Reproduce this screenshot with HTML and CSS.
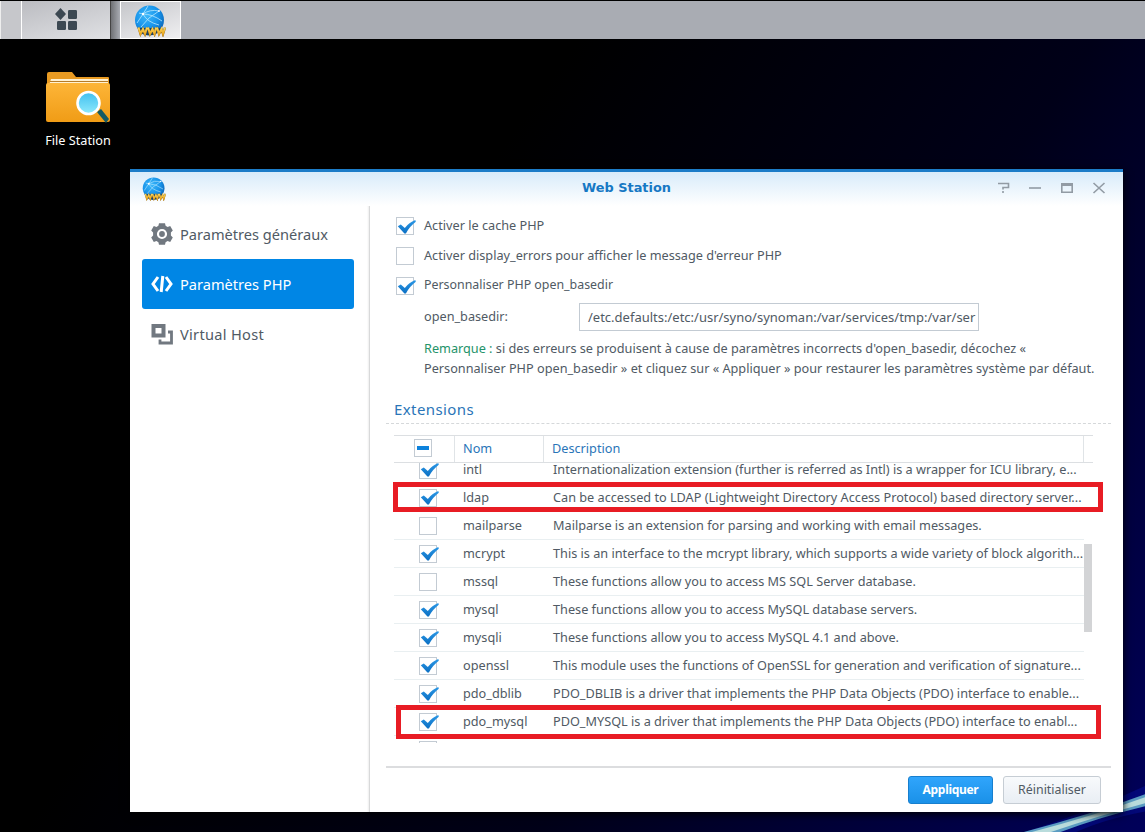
FILE: index.html
```html
<!DOCTYPE html>
<html lang="fr">
<head>
<meta charset="utf-8">
<title>Web Station</title>
<link rel="stylesheet" href="styles.css">
</head>
<body>
<svg width="0" height="0" class="defs">
  <defs>
    <radialGradient id="sphere" cx=".4" cy=".35" r=".7"><stop offset="0" stop-color="#3db8fa"/><stop offset=".6" stop-color="#1793ea"/><stop offset="1" stop-color="#0b62b4"/></radialGradient>
    <linearGradient id="gold" x1="0" y1="0" x2="0" y2="1"><stop offset="0" stop-color="#fbd860"/><stop offset="1" stop-color="#eba71e"/></linearGradient>
    <linearGradient id="folder" x1="0" y1="0" x2="0" y2="1"><stop offset="0" stop-color="#fdb538"/><stop offset="1" stop-color="#f09c16"/></linearGradient>
    <linearGradient id="lens" x1="0" y1="0" x2="0" y2="1"><stop offset="0" stop-color="#40bff0"/><stop offset="1" stop-color="#8feafc"/></linearGradient>
    <linearGradient id="tick" x1="0" y1="0" x2="0" y2="1"><stop offset="0" stop-color="#2b98e6"/><stop offset="1" stop-color="#0c70c4"/></linearGradient>
    <symbol id="globe" viewBox="0 0 32 32">
      <circle cx="15.500" cy="15" r="14.500" fill="url(#sphere)"/>
      <path d="M3 18 9 9Q16 4 25 6M9 9Q13 17 25 20M25 6Q14 12 7 22M5 8 9 9Q18 9 28 16M14 1 9 9" fill="none" stroke="#b8e8ff" stroke-width=".8"/>
      <circle cx="9" cy="9" r="1.200" fill="#fff"/><circle cx="25" cy="6" r=".9" fill="#fff"/>
      <path d="M5 23h22q-3 7.500-12 7.500T5 23Z" fill="#1a4468"/>
      <path d="M4.500 22.500 6.500 29 9 24 11 29 13 22.500M14 22.500 16 29 18.500 24 20.500 29 22 22.500M23 22.500 25 29 27.500 24 29 29 31 22.500" fill="none" stroke="#8a6424" stroke-width="2.300"/>
      <path d="M4.500 22.500 6.500 29 9 24 11 29 13 22.500M14 22.500 16 29 18.500 24 20.500 29 22 22.500M23 22.500 25 29 27.500 24 29 29 31 22.500" fill="none" stroke="url(#gold)" stroke-width="1.900"/>
    </symbol>
    <symbol id="check" viewBox="0 0 19 15"><path d="M.800 7.200 3.800 5.400 7.800 9Q12 3.400 18.300 1L18.800 2.700Q12.500 7.500 8.900 14.400H7.400Z" fill="url(#tick)"/></symbol>
  </defs>
</svg>
<main class="desktop">
  <svg class="wallpaper-arc" width="145" height="60" viewBox="0 0 145 60">
    <path d="M18 62Q90 40 147 13V39Q100 48 72 62Z" fill="#0711a0" opacity=".45"/>
    <path d="M20 61Q90 43 146 22V34Q100 45 58 61Z" fill="#5b9cc2"/>
    <path d="M28 61Q94 44 146 25V31Q98 44 48 61Z" fill="#b9dcdc"/>
  </svg>
  <header class="taskbar">
    <div class="task-edge"></div>
    <div class="task-menu">
      <svg width="24" height="24" viewBox="0 0 24 24" fill="#3c4852"><path d="m6.500 0 5.500 6-5.500 6L1 6Z"/><rect x="14" y="2" width="9" height="9" rx="1.200"/><rect x="3" y="13" width="9" height="9" rx="1.200"/><rect x="14" y="13" width="9" height="9" rx="1.200"/></svg>
    </div>
    <div class="task-gap"></div>
    <div class="task-app"><svg width="32" height="32"><use href="#globe"/></svg></div>
  </header>
  <div class="shortcut">
    <svg width="66" height="54" viewBox="0 0 66 54">
      <path d="M2 50V3q0-2 2-2h23l4 5h32q1 0 1 1v40Z" fill="#e89a22"/>
      <path d="M6 8h57v6H4Z" fill="#fff1d2"/><path d="M5 10.500h58" stroke="#b67c29"/>
      <path d="M1 14q0-2 2-2h60q2 0 2 2v35q0 2-2 2H3q-2 0-2-2Z" fill="url(#folder)"/>
      <path d="m52 41 4-3 8 10-3 4Z" fill="#155b65"/>
      <circle cx="43.500" cy="32" r="11" fill="url(#lens)" stroke="#fff" stroke-width="2.600"/>
    </svg>
    <span class="shortcut-name">File Station</span>
  </div>

  <section class="window">
    <div class="titlebar">
      <svg class="app-icon" width="24" height="24"><use href="#globe"/></svg>
      <h1 class="title">Web Station</h1>
      <div class="controls">
        <svg width="108" height="12" viewBox="0 0 108 12" fill="none" stroke="#929ba4" stroke-width="1.600">
          <path d="M0 1.500H10.500V5.500H5V7.500M5 9V11"/><path d="M31 6H43"/><path d="M63.800 2.500H74.200V10.200H63.800Z"/><path d="M63 2.500H75" stroke-width="3"/><path d="m95.500 1 11 10M106.500 1 95.500 11"/>
        </svg>
      </div>
    </div>
    <div class="body">
      <nav class="sidebar">
        <a class="nav-item"><svg width="22" height="22" viewBox="0 0 22 22"><path d="M8 .3h6l.6 2.500 2 1.100 2.600-.8 2.600 4.300-1.900 2.100v3l1.900 2.100-2.600 4.300-2.600-.8-2 1.100-.6 2.500H8l-.6-2.500-2-1.100-2.600.8L.2 14.600l1.900-2.100v-3L.2 7.400l2.600-4.300 2.600.8 2-1.100Z" fill="#717880"/><circle cx="11" cy="11" r="4" fill="#717880" stroke="#fff" stroke-width="2.200"/></svg><span class="nav-text nav-general">Paramètres généraux</span></a>
        <a class="nav-item active"><svg width="22" height="18" viewBox="0 0 22 18" fill="none" stroke="#fff" stroke-width="3"><path d="M7 2 2 9l5 7M15 2l5 7-5 7M11.800 1 10.200 17"/></svg><span class="nav-text nav-php">Paramètres PHP</span></a>
        <a class="nav-item"><svg width="22" height="22" viewBox="0 0 22 22" fill="none" stroke="#717880"><path d="M2.500 3H12.500V12.500H2.500Z" stroke-width="4"/><path d="M17 9H20.500V20H9V16.500" stroke-width="2.800"/></svg><span class="nav-text nav-host">Virtual Host</span></a>
      </nav>
      <div class="content">
        <div class="options">
          <label class="option"><span class="box"><svg width="19" height="15"><use href="#check"/></svg></span><span class="option-text">Activer le cache PHP</span></label>
          <label class="option"><span class="box"></span><span class="option-text">Activer display_errors pour afficher le message d'erreur PHP</span></label>
          <label class="option"><span class="box"><svg width="19" height="15"><use href="#check"/></svg></span><span class="option-text personalize">Personnaliser PHP open_basedir</span></label>
          <div class="field"><span class="field-label">open_basedir:</span><div class="input">/etc.defaults:/etc:/usr/syno/synoman:/var/services/tmp:/var/ser</div></div>
          <p class="note"><span class="green">Remarque :</span> si des erreurs se produisent à cause de paramètres incorrects d'open_basedir, décochez «<br>Personnaliser PHP open_basedir » et cliquez sur « Appliquer » pour restaurer les paramètres système par défaut.</p>
        </div>
        <h2 class="section">Extensions</h2>
        <div class="grid">
          <div class="grid-head"><div class="head-check"><span class="box partial"></span></div><div class="head-name">Nom</div><div class="head-desc">Description</div></div>
          <div class="grid-view"><div class="rows" id="rows"></div><div class="scroll"></div></div>
        </div>
        <footer class="footer"><button class="btn primary">Appliquer</button><button class="btn">Réinitialiser</button></footer>
      </div>
    </div>
  </section>
  <div class="mark mark-ldap"></div>
  <div class="mark mark-mysql"></div>
</main>
<script src="rows.js"></script>
</body>
</html>
```
FILE: styles.css
```css
* { box-sizing: border-box; }
body { margin: 0; font: 12.7px/20px "Noto Sans", sans-serif; color: #505a64; overflow: hidden; }
.defs { position: absolute; }
.desktop { position: relative; width: 1145px; height: 832px; overflow: hidden; background: linear-gradient(125deg, #000 35%, #000018 65%, #00005a 100%); }
.wallpaper-arc { position: absolute; right: 0; bottom: 0; }
.taskbar { display: flex; height: 39px; padding-top: 1px; background: linear-gradient(#000 1px, #a9acb3 1px); }
.task-edge { width: 21px; background: #c6c7cb; border-left: 1px solid #eee; }
.task-menu { width: 89px; display: flex; align-items: center; justify-content: center; border-left: 1px solid #fff; background: linear-gradient(165deg, #bbbcc1, #e0e1e4); }
.task-gap { width: 10px; border-left: 1px solid #444; background: linear-gradient(90deg, #6f7175, #a9acb3); }
.task-app { width: 61px; display: flex; align-items: center; justify-content: center; border: 1px solid #fff; background: linear-gradient(160deg, #c5c6ca, #efeff1); }
.task-app svg { margin: 1px 2px 0 0; }
.shortcut { width: 90px; margin: 32px 0 0 33px; display: flex; flex-direction: column; align-items: center; gap: 5px; color: #fff; }
.shortcut-name { white-space: nowrap; }
.window { position: absolute; left: 130px; top: 169px; width: 993px; height: 643px; display: flex; flex-direction: column; background: #fff; border-top: 3px solid #1c7cc8; box-shadow: 0 2px 8px #000; }
.titlebar { height: 34px; display: grid; grid-template-columns: 120px 1fr 120px; align-items: center; padding: 0 17px 2px 12px; background: linear-gradient(#d8ebfa, #fff); }
.app-icon { margin-top: 2px; }
.title { margin: 0; padding-left: 5px; text-align: center; font: bold 12.9px/20px "DejaVu Sans", sans-serif; color: #1678c4; }
.controls { display: flex; justify-content: flex-end; }
.body { flex: 1; display: flex; min-height: 0; }
.sidebar { width: 240px; padding: 3px 15px 0 12px; border-right: 1px solid #d8d9da; box-shadow: inset -2px 0 2px -1px #eee; }
.nav-item { height: 50px; display: flex; align-items: center; gap: 7px; padding-left: 9px; border-radius: 3px; }
.nav-text { padding-bottom: 1px; font-size: 14.6px; }
.nav-host { letter-spacing: .3px; }
.active { background: #0086e5; color: #fff; }
.content { flex: 1; padding: 5px 12px 0 16px; display: flex; flex-direction: column; }
.options { padding-left: 10px; height: 182px; }
.option { display: flex; align-items: center; gap: 10px; height: 30px; }
.option-text { padding-bottom: 2px; }
.personalize { font-size: 12.4px; }
.box { position: relative; width: 18px; height: 18px; flex: none; border: 1px solid #c3cbd3; background: #fff; }
.box svg { position: absolute; left: 0; top: 1px; }
.partial { display: flex; align-items: center; justify-content: center; }
.partial::after { content: ""; width: 12px; height: 4px; background: #0d82dc; }
.field { display: flex; padding-left: 28px; align-items: center; height: 32px; }
.field-label { width: 155px; padding-bottom: 2px; }
.input { width: 400px; height: 28px; border: 1px solid #c3cbd3; padding: 3px 0 0 8px; overflow: hidden; white-space: nowrap; font-size: 13px; }
.note { margin: 5px 0 0 28px; white-space: nowrap; }
.green { color: #24936a; }
.section { margin: 0; height: 31px; padding: 6px 8px; font-size: 15px; letter-spacing: .4px; font-weight: 400; color: #2a75b8; border-bottom: 1px dashed #d5d8da; }
.grid { width: 699px; margin: 11px 0 0 8px; }
.grid-head { height: 28px; display: flex; border: solid #dcdfe2; border-width: 1px 0; color: #2a75b8; line-height: 25px; }
.head-check { width: 61px; border-right: 1px solid #e0e4e7; padding: 3px 0 0 20px; }
.head-name { width: 89px; border-right: 1px solid #e0e4e7; padding-left: 8px; }
.head-desc { width: 540px; border-right: 1px solid #e0e4e7; padding-left: 8px; }
.grid-view { position: relative; height: 280px; overflow: hidden; }
.rows { margin-top: -7px; width: 690px; }
.row { height: 28px; display: flex; align-items: center; border-bottom: 1px solid #e9eff1; padding-left: 25px; white-space: nowrap; }
.row-name { flex: none; width: 90px; margin-left: 26px; padding-bottom: 1px; }
.row-desc { padding-bottom: 1px; }
.row .box svg { top: 0; }
.scroll { position: absolute; right: 1px; top: 81px; width: 8px; height: 88px; background: #d3d4d6; }
.footer { margin-top: auto; height: 46px; border-top: 2px solid #dcdddf; display: flex; justify-content: flex-end; align-items: flex-start; gap: 10px; padding: 8px 10px 0 0; }
.btn { height: 28px; width: 98px; padding: 0; border: 1px solid #c6cdd4; border-radius: 3px; background: linear-gradient(#f8fafc, #e9eef4); color: #505a64; font: inherit; font-size: 12.4px; }
.primary { width: 85px; background: linear-gradient(#30a5fc, #1a91e8); border-color: #177fce; color: #fff; font-weight: 700; font-size: 12px; letter-spacing: -.3px; }
.mark { position: absolute; border: 5px solid #e81c24; }
.mark-ldap { left: 393px; top: 482px; width: 710px; height: 30px; }
.mark-mysql { left: 396px; top: 705px; width: 705px; height: 34px; }
```
FILE: rows.js
```js
const data = [
  ["intl", 1, "Internationalization extension (further is referred as Intl) is a wrapper for ICU library, e..."],
  ["ldap", 1, "Can be accessed to LDAP (Lightweight Directory Access Protocol) based directory server..."],
  ["mailparse", 0, "Mailparse is an extension for parsing and working with email messages."],
  ["mcrypt", 1, "This is an interface to the mcrypt library, which supports a wide variety of block algorith..."],
  ["mssql", 0, "These functions allow you to access MS SQL Server database."],
  ["mysql", 1, "These functions allow you to access MySQL database servers."],
  ["mysqli", 1, "These functions allow you to access MySQL 4.1 and above."],
  ["openssl", 1, "This module uses the functions of OpenSSL for generation and verification of signature..."],
  ["pdo_dblib", 1, "PDO_DBLIB is a driver that implements the PHP Data Objects (PDO) interface to enable..."],
  ["pdo_mysql", 1, "PDO_MYSQL is a driver that implements the PHP Data Objects (PDO) interface to enabl..."],
  ["", 0, ""]
];
document.getElementById("rows").innerHTML = data.map(([name, on, text]) =>
  `<div class="row"><span class="box">${on ? '<svg width="19" height="15"><use href="#check"/></svg>' : ""}</span><span class="row-name">${name}</span><span class="row-desc">${text}</span></div>`).join("");
```
